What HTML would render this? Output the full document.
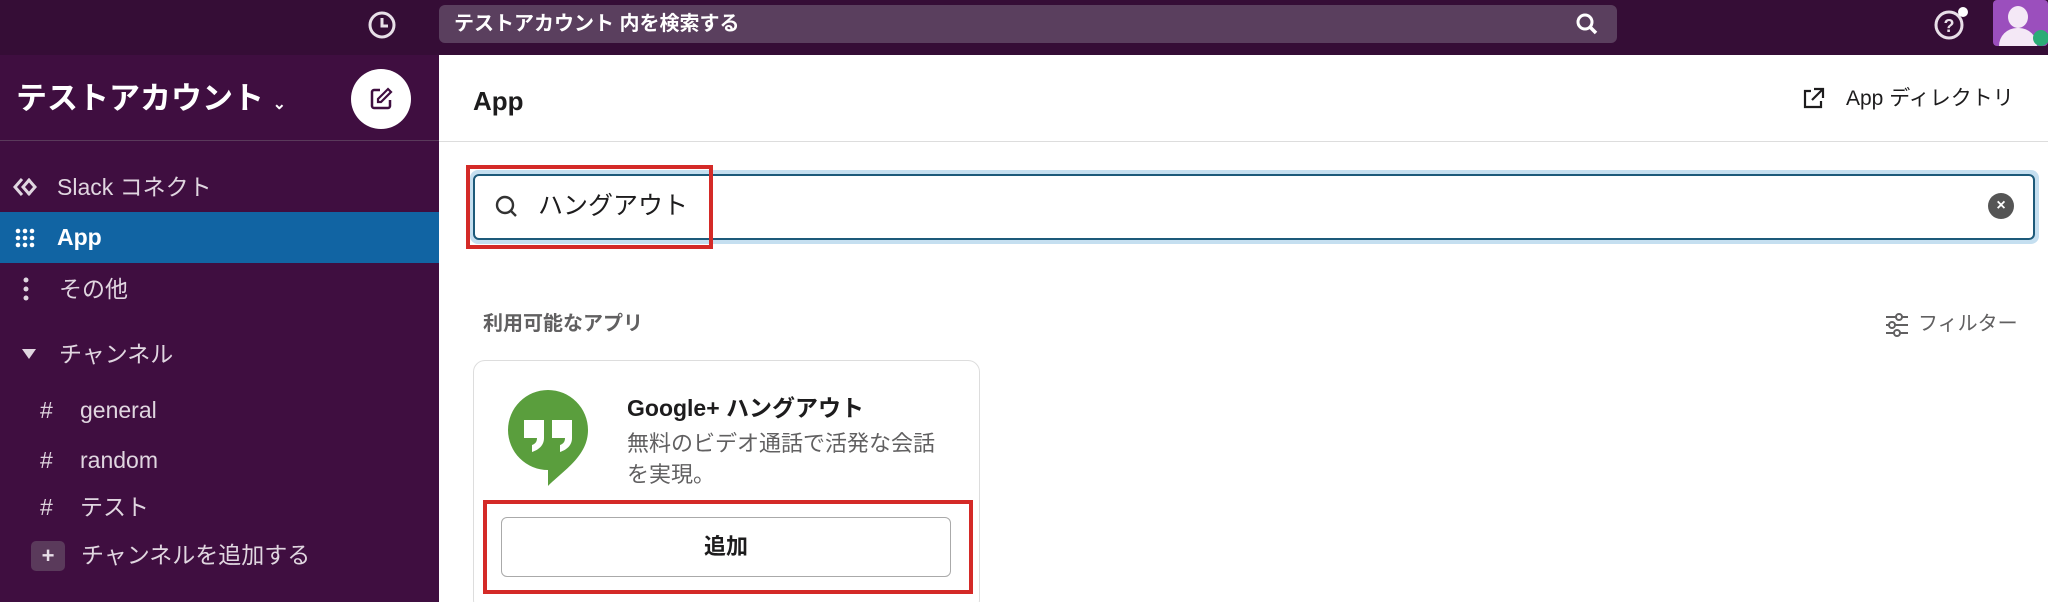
<!DOCTYPE html>
<html style="overflow:hidden;width:2048px;height:602px"><head><meta charset="utf-8"><style>
*{margin:0;padding:0;box-sizing:border-box}
body{width:2048px;height:602px;overflow:hidden;background:#fff;font-family:"Liberation Sans","Noto Sans CJK JP",sans-serif;position:relative}
.abs{position:absolute}
#top{left:0;top:0;width:2048px;height:55px;background:#350d36}
#side{left:0;top:55px;width:439px;height:547px;background:#3f0e40}
.sitem{position:absolute;height:50px;color:#e0d6e0;font-size:23px;line-height:50px;white-space:nowrap}
</style></head><body>
<div id="top" class="abs"></div>
<svg class="abs" style="left:367px;top:10px" width="30" height="30" viewBox="0 0 30 30"><circle cx="15" cy="15" r="12" fill="none" stroke="#e8dfe8" stroke-width="3"/><path d="M15 8v8h6" fill="none" stroke="#e8dfe8" stroke-width="3"/></svg>
<div class="abs" style="left:439px;top:5px;width:1178px;height:38px;background:#5a3f5e;border-radius:6px"></div>
<div class="abs" style="left:454px;top:5px;line-height:38px;color:#fff;font-size:20px;font-weight:bold">テストアカウント 内を検索する</div>
<svg class="abs" style="left:1575px;top:12px" width="24" height="24" viewBox="0 0 24 24"><circle cx="10" cy="10" r="7" fill="none" stroke="#fff" stroke-width="3"/><path d="M15 15l6 6" stroke="#fff" stroke-width="3.5"/></svg>
<svg class="abs" style="left:1932px;top:6px" width="40" height="40" viewBox="0 0 40 40"><circle cx="17" cy="19" r="13" fill="none" stroke="#e8dfe8" stroke-width="3"/><text x="17" y="26" font-size="18" font-weight="bold" fill="#e8dfe8" text-anchor="middle" font-family="Liberation Sans">?</text><circle cx="31" cy="6" r="5" fill="#fff"/></svg>
<div class="abs" style="left:1993px;top:0;width:55px;height:46px;background:#9b4fbd;border-radius:4px;overflow:hidden"><div class="abs" style="left:15px;top:6px;width:20px;height:22px;background:#f4e8f6;border-radius:50%"></div><div class="abs" style="left:6px;top:28px;width:38px;height:22px;background:#f4e8f6;border-radius:18px 18px 0 0"></div><div class="abs" style="left:40px;top:30px;width:16px;height:16px;background:#2bac76;border-radius:50%"></div></div>

<div id="side" class="abs"></div>
<div class="abs" style="left:16px;top:78px;color:#fff;font-size:31px;font-weight:bold;line-height:42px;white-space:nowrap">テストアカウント <span style="font-size:16px">⌄</span></div>
<div class="abs" style="left:351px;top:69px;width:60px;height:60px;border-radius:50%;background:#fff"></div>
<svg class="abs" style="left:367px;top:85px" width="28" height="28" viewBox="0 0 28 28"><path d="M13 5H7a2 2 0 0 0-2 2v14a2 2 0 0 0 2 2h14a2 2 0 0 0 2-2v-6" fill="none" stroke="#3f0e40" stroke-width="2.5"/><path d="M21 4l3 3-10 10h-3v-3z" fill="none" stroke="#3f0e40" stroke-width="2.2"/></svg>
<div class="abs" style="left:0;top:140px;width:439px;height:1px;background:#5a3a5b"></div>

<svg class="abs" style="left:12px;top:176px" width="32" height="22" viewBox="0 0 32 22"><path d="M10 3L3 11l7 8M18 3l-7 8 7 8M16 3l7 8-7 8" fill="none" stroke="#e0d6e0" stroke-width="3"/></svg>
<div class="sitem" style="top:162px;left:57px">Slack コネクト</div>
<div class="abs" style="left:0;top:212px;width:439px;height:51px;background:#1164a3"></div>
<svg class="abs" style="left:15px;top:228px" width="22" height="20" viewBox="0 0 22 20"><g fill="#fff"><circle cx="3" cy="3" r="2.3"/><circle cx="10" cy="3" r="2.3"/><circle cx="17" cy="3" r="2.3"/><circle cx="3" cy="10" r="2.3"/><circle cx="10" cy="10" r="2.3"/><circle cx="17" cy="10" r="2.3"/><circle cx="3" cy="17" r="2.3"/><circle cx="10" cy="17" r="2.3"/><circle cx="17" cy="17" r="2.3"/></g></svg>
<div class="sitem" style="top:212px;left:57px;color:#fff;font-weight:bold;line-height:51px">App</div>
<svg class="abs" style="left:22px;top:276px" width="8" height="26" viewBox="0 0 8 26"><g fill="#e0d6e0"><circle cx="4" cy="4" r="2.5"/><circle cx="4" cy="13" r="2.5"/><circle cx="4" cy="22" r="2.5"/></g></svg>
<div class="sitem" style="top:264px;left:59px">その他</div>
<svg class="abs" style="left:21px;top:348px" width="16" height="12" viewBox="0 0 16 12"><path d="M1 1h14L8 11z" fill="#e0d6e0"/></svg>
<div class="sitem" style="top:329px;left:59px">チャンネル</div>
<div class="sitem" style="top:385px;left:40px">#</div><div class="sitem" style="top:385px;left:80px">general</div>
<div class="sitem" style="top:435px;left:40px">#</div><div class="sitem" style="top:435px;left:80px">random</div>
<div class="sitem" style="top:482px;left:40px">#</div><div class="sitem" style="top:482px;left:80px">テスト</div>
<div class="abs" style="left:31px;top:541px;width:34px;height:30px;background:#5a3a5b;border-radius:5px;color:#e8dfe8;font-size:22px;text-align:center;line-height:30px;font-weight:bold">+</div>
<div class="sitem" style="top:530px;left:81px">チャンネルを追加する</div>

<div class="abs" style="left:473px;top:82px;font-size:26px;font-weight:bold;color:#1d1c1d;line-height:38px">App</div>
<svg class="abs" style="left:1800px;top:86px" width="26" height="26" viewBox="0 0 26 26"><path d="M11 5H5v16h16v-6" fill="none" stroke="#1d1c1d" stroke-width="2.2"/><path d="M14 3h9v9M23 3L12 14" fill="none" stroke="#1d1c1d" stroke-width="2.2"/></svg>
<div class="abs" style="left:1846px;top:84px;font-size:21px;color:#1d1c1d;line-height:30px">App ディレクトリ</div>
<div class="abs" style="left:439px;top:141px;width:1609px;height:1px;background:#ddd"></div>

<div class="abs" style="left:470px;top:170px;width:1569px;height:74px;border-radius:8px;background:#c5dff0"></div>
<div class="abs" style="left:473px;top:174px;width:1562px;height:66px;border-radius:6px;background:#fff;border:2px solid #1d5a7a"></div>
<svg class="abs" style="left:494px;top:194px" width="26" height="26" viewBox="0 0 26 26"><circle cx="11" cy="11" r="8" fill="none" stroke="#333" stroke-width="2.4"/><path d="M17 17l5 5" stroke="#333" stroke-width="2.4"/></svg>
<div class="abs" style="left:538px;top:188px;font-size:25px;color:#1d1c1d;line-height:36px">ハングアウト</div>
<div class="abs" style="left:1988px;top:193px;width:26px;height:26px;border-radius:50%;background:#555;color:#fff;font-size:16px;font-weight:bold;text-align:center;line-height:26px">×</div>
<div class="abs" style="left:466px;top:165px;width:247px;height:84px;border:4px solid #d42a27"></div>

<div class="abs" style="left:483px;top:310px;font-size:20px;color:#616061;font-weight:bold;line-height:28px">利用可能なアプリ</div>
<svg class="abs" style="left:1884px;top:312px" width="26" height="26" viewBox="0 0 26 26"><g stroke="#616061" stroke-width="2" fill="none"><path d="M2 5h22M2 13h22M2 21h22"/><circle cx="15" cy="5" r="3" fill="#fff"/><circle cx="8" cy="13" r="3" fill="#fff"/><circle cx="13" cy="21" r="3" fill="#fff"/></g></svg>
<div class="abs" style="left:1918px;top:310px;font-size:20px;color:#616061;line-height:28px">フィルター</div>

<div class="abs" style="left:473px;top:360px;width:507px;height:252px;border:1px solid #ddd;border-radius:12px;background:#fff"></div>
<svg class="abs" style="left:505px;top:388px" width="86" height="100" viewBox="0 0 86 100"><path d="M43 2a40 40 0 0 1 40 40c0 26-24 40-40 56V82A40 40 0 0 1 43 2z" fill="#5a9e3d"/><path d="M19 32h20v18c0 8-6 12-12 14v-7c3-1 5-3 5-7h-13z M47 32h20v18c0 8-6 12-12 14v-7c3-1 5-3 5-7h-13z" fill="#fff"/></svg>
<div class="abs" style="left:627px;top:392px;font-size:23px;font-weight:bold;color:#1d1c1d;line-height:32px">Google+ ハングアウト</div>
<div class="abs" style="left:627px;top:428px;font-size:22px;color:#616061;line-height:31px;width:350px">無料のビデオ通話で活発な会話<br>を実現。</div>
<div class="abs" style="left:501px;top:517px;width:450px;height:60px;border:1px solid #aaa;border-radius:6px;background:#fff;text-align:center;line-height:58px;font-size:22px;font-weight:bold;color:#1d1c1d">追加</div>
<div class="abs" style="left:483px;top:500px;width:490px;height:94px;border:4px solid #d42a27"></div>
</body></html>
